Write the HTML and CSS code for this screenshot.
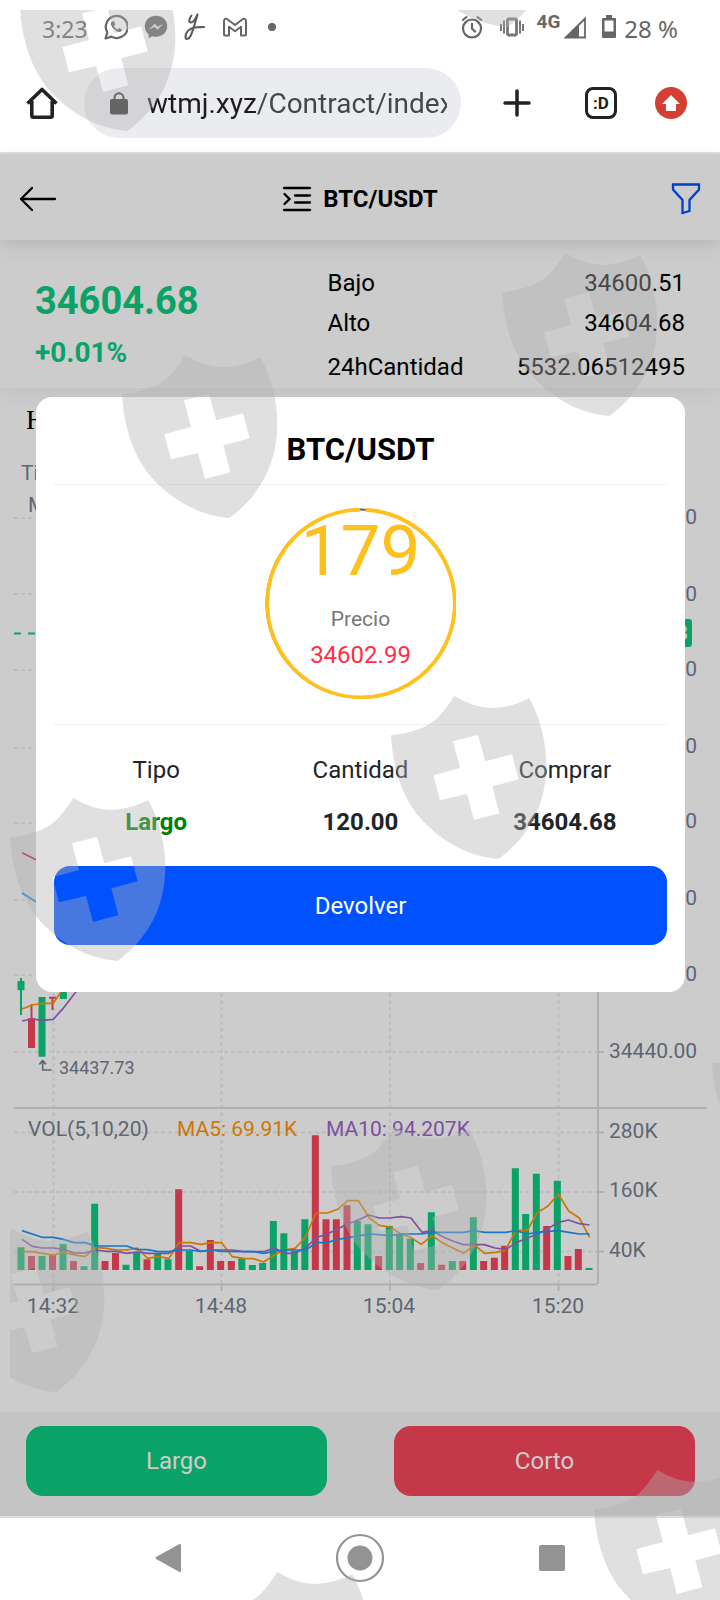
FILE: index.html
```html
<!DOCTYPE html>
<html lang="es">
<head>
<meta charset="utf-8">
<meta name="viewport" content="width=device-width, initial-scale=1">
<title>BTC/USDT</title>
<link rel="stylesheet" href="styles.css">
</head>
<body>
<div class="phone">
  <div class="status">
    <div class="status-group">
      <span class="clock">3:23</span>
      <svg width="24" height="26" viewBox="0 0 24 26" fill="none" stroke="#666" stroke-width="2.2"><path d="M1.500 24.500l1.800-6A11 11 0 1 1 7.500 22.600z" stroke-linejoin="round"/><path d="M8 7.500c-2 1.500-1 4.500 2 7.500s6 4 7.500 2l.5-1.500-3-1.500-1.500 1.500c-1.500-.5-3-2-3.500-3.500L11.300 10.500 10 7.300z" fill="#666" stroke="none"/></svg>
      <svg width="24" height="24" viewBox="0 0 24 24"><path d="M12 .8C5.500.8.8 5.400.8 11.400c0 3.400 1.500 6 3.900 7.900v3.900l3.500-2c1.200.4 2.500.5 3.800.5 6.500 0 11.200-4.500 11.200-10.400S18.500.8 12 .8z" fill="#666"/><path d="M4.800 14.800l5.700-6 3.200 2.600 5.500-2.700-5.600 6-3.300-2.600z" fill="#dedede"/></svg>
      <svg width="22" height="28" viewBox="0 0 22 28" fill="none" stroke="#5c5c5c" stroke-width="2.100" stroke-linecap="round" stroke-linejoin="round"><path d="M7.500 2.500C5 6 4.500 9 6.500 9.500 9 10 11.500 6 13.500 1.500 11.500 8 9.500 17 6.500 23c-1.500 3-4.500 4-5 1.500C1 20 5 15.500 10 14.500c3-.6 6-.3 10-.5"/></svg>
      <svg width="26" height="20" viewBox="0 0 26 20" fill="none" stroke="#666" stroke-width="2" stroke-linejoin="round"><path d="M2 17.500V4.200Q2.200 1 5 2l8 6 8-6q2.800-1 3 2.200v13.300q0 1-1 1h-4V9.700L13 14.200 7 9.700v8.800H3q-1 0-1-1z"/></svg>
      <svg width="16" height="16" viewBox="0 0 16 16"><circle cx="8" cy="8" r="4" fill="#666"/></svg>
    </div>
    <div class="status-group status-right">
      <svg class="alarm" width="22" height="24" viewBox="0 0 22 24" fill="none" stroke="#666" stroke-width="2.200"><circle cx="11" cy="13.500" r="9"/><path d="M11 8v5.500l3.700 3.700M1.200 5.500l5-4M20.800 5.500l-5-4"/></svg>
      <svg class="vibrate" width="26" height="20" viewBox="0 0 26 20" fill="none" stroke="#777" stroke-width="2"><rect x="8.500" y="2" width="9" height="16" rx="1.500" stroke-width="2.800"/><path d="M5 3.500v13M21 3.500v13M2 7v7M24 7v7"/></svg>
      <span class="network">4G</span>
      <svg width="22" height="23" viewBox="0 0 22 23"><path d="M21 2.500V21.500H2z" fill="none" stroke="#666" stroke-width="1.800"/><path d="M15 7.500V22H0z" fill="#666"/></svg>
      <svg class="battery" width="14" height="24" viewBox="0 0 14 24"><path d="M4 0h6v3h3q1 0 1 1v18q0 1-1 1H1q-1 0-1-1V4q0-1 1-1h3zM2.500 5.500v11h9v-11z" fill="#666" fill-rule="evenodd"/></svg>
      <span class="charge">28 %</span>
    </div>
  </div>

  <div class="browser">
    <button class="icon-btn" aria-label="Inicio"><svg width="32" height="32" viewBox="0 0 32 32" fill="none" stroke="#222" stroke-width="3.600" stroke-linejoin="round"><path d="M1.500 16.500L16 2.500l14.500 14M5.800 14v14.500q0 1.700 1.700 1.700h17q1.700 0 1.700-1.700V14"/></svg></button>
    <div class="address">
      <svg width="18" height="23" viewBox="0 0 18 23"><path d="M4.500 8V6a4.500 4.800 0 0 1 9 0v2" fill="none" stroke="#333" stroke-width="2"/><rect y="7" width="18" height="15.500" rx="2" fill="#333"/></svg>
      <input class="url" type="text" aria-label="Dirección" value="wtmj.xyz/Contract/index">
    </div>
    <button class="icon-btn add" aria-label="Nueva pestaña"><svg width="32" height="32" viewBox="0 0 32 32" stroke="#222" stroke-width="3.500" stroke-linecap="round"><path d="M16 4v24M4 16h24"/></svg></button>
    <button class="tabs" aria-label="Pestañas">:D</button>
    <button class="icon-btn update" aria-label="Actualizar"><svg width="32" height="32" viewBox="0 0 32 32"><circle cx="16" cy="16" r="16" fill="#d33f32"/><path d="M16 8l9 9h-4v7H11v-7H7z" fill="#fff"/></svg></button>
  </div>

  <main class="app">
    <header class="bar">
      <button class="icon-btn back" aria-label="Volver"><svg width="38" height="26" viewBox="0 0 38 26" fill="none" stroke="#000" stroke-width="2.300" stroke-linecap="round" stroke-linejoin="round"><path d="M36 13H2M13 2L2 13l11 11"/></svg></button>
      <h1 class="pair"><svg width="30" height="26" viewBox="0 0 30 26" fill="none" stroke="#000" stroke-width="2.300" stroke-linecap="round"><path d="M2 2h26M13 9.500h15M13 16.500h15M2 24h26M2.500 8l5 5-5 5"/></svg>BTC/USDT</h1>
      <button class="icon-btn filter" aria-label="Filtrar"><svg width="30" height="32" viewBox="0 0 30 32" fill="none" stroke="#0052ff" stroke-width="2.300"><path d="M2 1.500h26V6.500L18.500 17v11L11.500 30V17L2 6.500z"/></svg></button>
    </header>

    <section class="quote">
      <div class="last">
        <strong class="price">34604.68</strong>
        <strong class="change">+0.01%</strong>
      </div>
      <dl class="stats">
        <div class="stat"><dt>Bajo</dt><dd>34600.51</dd></div>
        <div class="stat"><dt>Alto</dt><dd>34604.68</dd></div>
        <div class="stat stat-last"><dt>24hCantidad</dt><dd>5532.06512495</dd></div>
      </dl>
    </section>

    <svg class="chart" viewBox="0 388 720 1024" role="img" aria-label="Gráfico BTC/USDT">
      <text class="hour" x="26" y="429">Hora</text>
      <text class="label" x="21" y="480">Tiempo</text>
      <text class="label" x="28" y="512">MA</text>
      <g class="grid">
        <path d="M14 518H597M14 594H597M14 670H597M14 748H597M14 823H597M14 900H597M14 975H597M14 1052H597M14 1132.500H597M14 1192H597M14 1251.500H597"/>
        <path d="M53.500 440V1284M221.500 440V1284M390 440V1284M558.500 440V1284"/>
      </g>
      <path class="axis" d="M14 1108H707M598 440V1284M14 1284.500H597M598 1052h6M598 1132.500h6M598 1192h6M598 1251.500h6M53.500 1285v6M221.500 1285v6M390 1285v6M558.500 1285v6"/>
      <path class="last-line" d="M14 633.500H597"/>
      <g transform="translate(0 960) scale(.33333)" fill="none" stroke-width="21">
        <path stroke="#0ecb81" d="M63 930V862M126 930V888M189 930V852M252 930V919M284 930V731M378 930V914M410 930V876M473 930V882M504 930V898M568 930V872M725.500 930V895M757 930V915M788 930V909M820 930V783M851.500 930V820M883 930V872M914.500 930V778M1072 930V783M1104 930V793M1168 930V798M1199 930V822M1231 930V836M1294 930V757M1357 930V903M1420 930V772M1546 930V625M1577 930V762M1609 930V641M1672 930V662M1767 930V924M63 91V63M126 290V111M190 117V60"/>
        <path stroke="#f6465d" d="M94.500 930V888M157.500 930V882M220.500 930V903M315 930V903M346.500 930V879M441 930V898M536 930V688M599 930V919M631 930V840M662 930V903M694 930V903M946 930V526M978 930V778M1009 930V778M1041 930V736M1136 930V888M1262 930V909M1325 930V914M1388 930V903M1451 930V903M1483 930V893M1514 930V857M1640 930V798M1704 930V888M1735 930V867M94.500 264V175"/>
        <path stroke="#0ecb81" stroke-width="6" d="M63 54V165"/>
        <path stroke="#f6465d" stroke-width="6" d="M94.500 133V175M157.500 113V150M147 113H169"/>
        <g stroke-width="5" stroke-linejoin="round">
          <path stroke="#ff9600" d="M66 147L97 135 126 130 160 130 182 97M66 875L97 875 126 880 160 885 190 877 220 884 255 890 287 862 320 865 350 870 380 870 412 864 443 895 475 890 507 895 538 848 572 848 602 853 635 848 665 848 697 890 730 895 760 896 791 906 823 885 852 870 885 865 915 834 948 759 982 759 1013 748 1043 722 1075 722 1108 774 1138 796 1170 801 1201 821 1232 832 1264 853 1296 827 1328 849 1360 865 1391 880 1423 855 1454 880 1486 877 1516 871 1548 811 1582 811 1612 758 1644 738 1675 702 1706 753 1738 774 1769 832"/>
          <path stroke="#9d65c9" d="M66 183L97 177 126 181 160 178 192 142 228 95M66 838L97 859 126 864 160 864 190 868 222 879 255 879 287 870 320 874 350 874 380 880 412 876 443 880 507 880 540 858 572 858 602 874 635 870 697 870 730 875 791 875 823 864 855 880 885 880 917 864 950 832 982 822 1043 792 1080 778 1106 765 1138 774 1170 774 1202 770 1233 774 1266 817 1297 812 1328 830 1360 844 1390 854 1453 854 1485 864 1518 868 1548 848 1612 822 1644 806 1675 787 1706 780 1738 791 1769 795"/>
          <path stroke="#2196f3" d="M66-201L140-155M66 812L126 832 160 832 190 838 222 848 255 848 287 858 380 858 412 869 443 869 475 875 507 875 540 870 570 870 602 874 635 870 665 874 760 875 791 880 823 874 855 870 917 870 950 848 982 848 1013 838 1080 827 1110 822 1170 827 1202 822 1264 822 1297 817 1390 817 1423 812 1455 817 1518 817 1548 812 1582 822 1612 817 1675 812 1706 817 1738 822 1769 822"/>
          <path stroke="#e11d74" d="M66-322L140-285"/>
          <path stroke="#76808f" d="M155 330H128V302M118 313L128 302 138 313"/>
        </g>
      </g>
      <text class="low" x="59" y="1074">34437.73</text>
      <g class="label">
        <text x="609" y="524">34650.00</text>
        <text x="609" y="601">34620.00</text>
        <text x="609" y="676">34590.00</text>
        <text x="609" y="753">34560.00</text>
        <text x="609" y="828">34530.00</text>
        <text x="609" y="905">34500.00</text>
        <text x="609" y="981">34470.00</text>
        <text x="609" y="1058">34440.00</text>
        <text x="609" y="1138">280K</text>
        <text x="609" y="1197">160K</text>
        <text x="609" y="1257">40K</text>
      </g>
      <rect x="598" y="619" width="94" height="28" rx="3" fill="#0ecb81"/>
      <text class="tag" x="600" y="640">34604.68</text>
      <text class="label" x="28" y="1136">VOL(5,10,20)</text>
      <text class="label ma5" x="177" y="1136">MA5: 69.91K</text>
      <text class="label ma10" x="326" y="1136">MA10: 94.207K</text>
      <g class="label times">
        <text x="53" y="1313">14:32</text>
        <text x="221" y="1313">14:48</text>
        <text x="389" y="1313">15:04</text>
        <text x="558" y="1313">15:20</text>
      </g>
    </svg>

    <footer class="trade">
      <button class="trade-btn long">Largo</button>
      <button class="trade-btn short">Corto</button>
    </footer>

    <div class="overlay">
      <div class="modal" role="dialog" aria-labelledby="order-title">
        <h2 class="modal-title" id="order-title">BTC/USDT</h2>
        <div class="countdown">
          <div class="dial">
            <svg class="ring" viewBox="0 0 191 191" fill="none"><circle cx="95.500" cy="95.500" r="94" stroke="#555a70" stroke-width="2"/><path d="M100.500 1.800A93.800 93.800 0 1 1 95 1.700" stroke="#ffc01c" stroke-width="3.800"/></svg>
            <span class="seconds">179</span>
            <span class="caption">Precio</span>
            <span class="current">34602.99</span>
          </div>
        </div>
        <table class="order">
          <thead><tr><th scope="col">Tipo</th><th scope="col">Cantidad</th><th scope="col">Comprar</th></tr></thead>
          <tbody><tr><td class="side">Largo</td><td>120.00</td><td>34604.68</td></tr></tbody>
        </table>
        <button class="return">Devolver</button>
      </div>
    </div>
  </main>

  <nav class="system">
    <button class="icon-btn" aria-label="Atrás"><svg width="28" height="30" viewBox="0 0 28 30"><path d="M26 2v26L2.500 15z" fill="#939393" stroke="#939393" stroke-width="2" stroke-linejoin="round"/></svg></button>
    <button class="icon-btn" aria-label="Inicio del teléfono"><svg width="50" height="50" viewBox="0 0 50 50"><circle cx="25" cy="25" r="23" fill="none" stroke="#939393" stroke-width="2.200"/><circle cx="25" cy="25" r="12.500" fill="#939393"/></svg></button>
    <button class="icon-btn" aria-label="Recientes"><svg width="28" height="28" viewBox="0 0 28 28"><rect x="1" y="1" width="26" height="26" rx="2" fill="#939393"/></svg></button>
  </nav>

  <svg class="shields" viewBox="0 0 720 1600" preserveAspectRatio="xMidYMin slice" aria-hidden="true">
    <defs>
      <path id="shield" fill-rule="evenodd" transform="scale(.33333)" d="M0 118C50 112 105 98 137 68Q162 44 190 0Q250 36 302 36Q357 36 415 7C448 65 466 140 466 206C466 330 410 425 322 489C220 482 130 420 75 351C30 290 5 210 0 118zM186 136L261 117 283 196 363 175 383 250 304 271 325 352 249 372 228 294 147 313 127 238 207 216z"/>
    </defs>
    <g fill="#b2b2b2" fill-opacity=".4">
      <use href="#shield" x="20" y="-32"/>
      <use href="#shield" x="400" y="-136"/>
      <use href="#shield" x="502" y="253"/>
      <use href="#shield" x="122" y="355"/>
      <use href="#shield" x="391" y="696"/>
      <use href="#shield" x="10" y="798"/>
      <use href="#shield" x="712" y="1024"/>
      <use href="#shield" x="331" y="1127"/>
      <use href="#shield" x="-51" y="1229"/>
      <use href="#shield" x="594" y="1470"/>
      <use href="#shield" x="214" y="1572"/>
    </g>
  </svg>
</div>
</body>
</html>
```
FILE: styles.css
```css
* { box-sizing: border-box; }
body { margin: 0; background: #fff; font-family: Roboto, "Liberation Sans", sans-serif; font-size: 24px; color: #000; }
button, input { font: inherit; border: 0; padding: 0; background: none; color: inherit; }
svg { display: block; flex: none; }
.phone { position: relative; overflow: hidden; }
.icon-btn { display: flex; align-items: center; justify-content: center; flex: none; }

/* Status bar */
.status { display: flex; justify-content: space-between; align-items: center; height: 54px; padding: 0 42px; font-family: "Noto Sans", sans-serif; color: #666; }
.status-group { display: flex; align-items: center; gap: 16px; }
.status-right { gap: 4px; }
.clock { font-size: 23px; line-height: 28px; padding-top: 4px; }
.charge { line-height: 28px; padding-top: 4px; }
.vibrate { margin: 0 8px 0 12px; }
.network { font: 700 19px/20px Roboto, sans-serif; padding-bottom: 10px; }
.battery { margin: 0 4px 0 12px; }

/* Browser bar */
.browser { display: flex; align-items: center; height: 100px; padding: 0 33px 0 26px; border-bottom: 2px solid #dedede; }
.address { display: flex; align-items: center; gap: 19px; flex: 1; min-width: 0; height: 70px; margin: 0 40px 0 26px; padding: 0 14px 0 26px; border-radius: 35px; background: #ebecf0; }
.url { flex: 1; min-width: 0; height: 40px; font-size: 28px; color: transparent; background: linear-gradient(90deg, #1c1c1c 109px, #444746 109px); -webkit-background-clip: text; background-clip: text; }
.tabs { width: 32px; height: 32px; margin: 0 38px 0 52px; border: 3px solid #222; border-radius: 8px; font-size: 17px; font-weight: 700; line-height: 24px; text-align: center; color: #222; }

/* Trading page */
.app { position: relative; background: #fff; }
.bar { position: relative; display: grid; grid-template-columns: 1fr auto 1fr; align-items: center; height: 86px; padding: 3px 19px 0; background: #fff; box-shadow: 0 6px 16px rgba(0, 0, 0, .1); z-index: 2; }
.back { justify-self: start; }
.filter { justify-self: end; }
.pair { display: flex; align-items: center; gap: 11px; margin: 0; font-size: 24px; font-weight: 700; line-height: 34px; }
.quote { position: relative; z-index: 1; display: grid; grid-template-columns: 45% 55%; height: 148px; padding: 0 35px; background: #fff; box-shadow: 0 6px 16px rgba(0, 0, 0, .05); }
.last { display: flex; flex-direction: column; padding-top: 35px; line-height: 52px; color: #0ecb81; }
.price { font-size: 38px; }
.change { font-size: 28px; }
.stats { margin: 0; padding-top: 23px; line-height: 40px; }
.stat { display: flex; justify-content: space-between; }
.stat-last { padding-top: 4px; }
.stat dd { margin: 0; }

.chart { width: 100%; height: auto; }
.grid { fill: none; stroke: #ededed; stroke-width: 2; stroke-dasharray: 4 3; }
.axis { fill: none; stroke: #dcdcdc; stroke-width: 2; }
.last-line { stroke: #0ecb81; stroke-width: 2; stroke-dasharray: 7 7; }
.hour { font-family: "Liberation Serif", serif; font-size: 27px; }
.label { font-size: 21px; fill: #76808f; }
.low { font-size: 18px; fill: #76808f; }
.tag { font-size: 21px; fill: #fff; }
.ma5 { fill: #ff9600; }
.ma10 { fill: #9d65c9; }
.times { text-anchor: middle; }

.trade { display: grid; grid-template-columns: 1fr 1fr; gap: 67px; height: 104px; padding: 14px 25px 20px 26px; background: #f5f5f5; }
.trade-btn { border-radius: 17px; color: #fff; }
.long { background: #0ecb81; }
.short { background: #f6465d; }

/* Order dialog */
.overlay { position: absolute; inset: 0; z-index: 3; padding: 243px 35px 0 36px; background: rgba(0, 0, 0, .2); }
.modal { padding: 0 18px 47px; border-radius: 16px; background: #fff; }
.modal-title { margin: 0; padding: 34px 0 15px; border-bottom: 1px solid #f0f0f0; font-size: 31px; font-weight: 700; line-height: 38px; text-align: center; }
.countdown { display: flex; justify-content: center; padding: 23px 0 25px; border-bottom: 1px solid #f0f0f0; }
.dial { position: relative; display: flex; flex-direction: column; align-items: center; width: 191px; height: 191px; padding-top: 15px; }
.ring { position: absolute; inset: 0; }
.seconds { font-size: 71px; line-height: 56px; color: #ffc01c; }
.caption { margin-top: 26px; font-size: 21px; line-height: 28px; color: #777; }
.current { margin-top: 4px; line-height: 36px; color: #ff2d45; }
.order { width: 100%; margin: 27px 0 26px; table-layout: fixed; border-collapse: collapse; line-height: 36px; text-align: center; color: #212529; }
.order th { padding: 0; font-weight: 400; }
.order td { padding: 16px 0 0; font-weight: 700; }
.order .side { color: #008000; }
.return { display: block; width: 100%; height: 79px; border-radius: 16px; background: #0052ff; color: #fff; }

/* System navigation */
.system { display: grid; grid-template-columns: repeat(3, 1fr); height: 84px; padding: 0 72px 2px; border-top: 2px solid #dedede; }

.shields { position: absolute; inset: 0; z-index: 5; width: 100%; height: 100%; clip-path: inset(10px 0 0 10px); pointer-events: none; }
```
